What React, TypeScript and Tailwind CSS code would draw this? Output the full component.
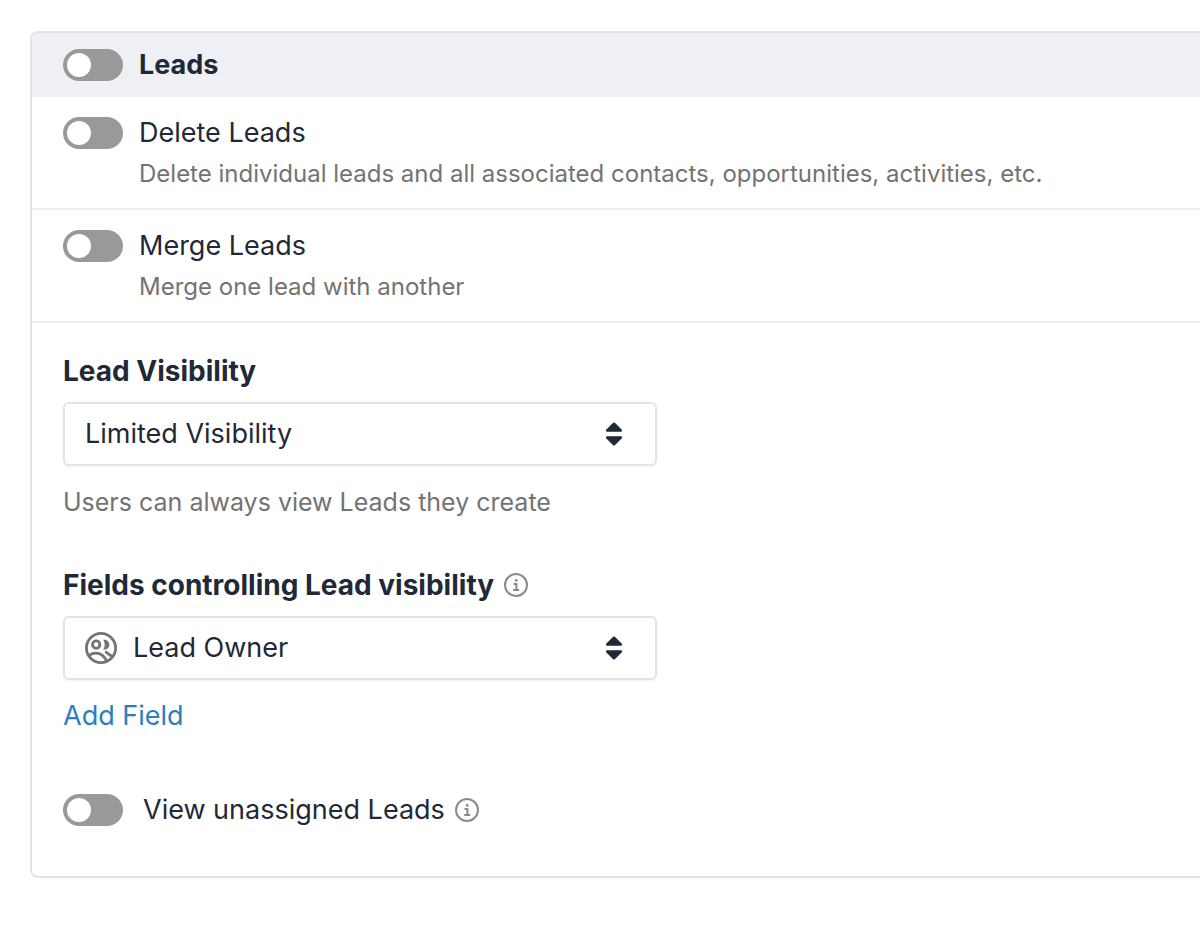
import React, { useId, useState } from "react";

function Toggle({ id }: { id: string }) {
  const [on, setOn] = useState(false);
  return (
    <input
      id={id}
      type="checkbox"
      role="switch"
      checked={on}
      onChange={(e) => setOn(e.target.checked)}
      className="flex h-8 w-15 shrink-0 cursor-pointer appearance-none items-center rounded-full bg-[#999999] px-1 before:size-6 before:rounded-full before:bg-white checked:justify-end checked:bg-[#2d7ebd]"
    />
  );
}

function PermissionRow({ title, description }: { title: string; description: string }) {
  const id = useId();
  return (
    <div className="flex gap-4 border-b-2 border-[#eeeeee] pt-5 pr-8 pb-[18px] pl-[31px]">
      <Toggle id={id} />
      <div>
        <label htmlFor={id} className="block leading-8">
          {title}
        </label>
        <p className="mt-[9px] text-[24px] leading-8 text-[#737373]">{description}</p>
      </div>
    </div>
  );
}

function InfoButton({ label }: { label: string }) {
  return (
    <button type="button" aria-label={label} className="cursor-pointer text-[#8a8a8a]">
      <svg viewBox="0 0 24 24" className="size-6" fill="none" stroke="currentColor" strokeWidth="2">
        <circle cx="12" cy="12" r="11" />
        <circle cx="12.2" cy="7.4" r="1.4" fill="currentColor" stroke="none" />
        <path d="M9.6 11.1H12.4V17M9.2 17H15.2" strokeWidth="2" />
      </svg>
    </button>
  );
}

function OwnerIcon() {
  return (
    <svg viewBox="0 0 32 32" className="size-8" fill="none" stroke="currentColor" strokeWidth="2.8">
      <circle cx="16" cy="16" r="14.6" />
      <circle cx="11.2" cy="12.6" r="3.7" />
      <path d="M18.2 7.8C21.6 7.4 24.4 9.6 24.4 12.7C24.4 15.8 21.6 18 18.2 17.6C20.2 14.6 20.2 10.8 18.2 7.8Z" fill="currentColor" stroke="none" />
      <path d="M4.4 23.2C9.4 19.6 17.2 20.2 21.6 28.8" />
      <path d="M20 19.8C23.2 20.2 23.4 23.4 27 23.8" />
    </svg>
  );
}

interface SelectFieldProps {
  id: string;
  options: string[];
  icon?: React.ReactNode;
}

function SelectField({ id, options, icon }: SelectFieldProps) {
  return (
    <div className="relative mt-[15px] max-w-[594px]">
      {icon && (
        <span className="pointer-events-none absolute inset-y-0 left-[22px] flex items-center text-[#737373]">
          {icon}
        </span>
      )}
      <select
        id={id}
        className={
          "h-16 w-full cursor-pointer appearance-none rounded-md border-2 border-[#e3e3e3] bg-white pr-16 shadow-xs " +
          (icon ? "pl-[68px]" : "pl-5")
        }
      >
        {options.map((o) => (
          <option key={o}>{o}</option>
        ))}
      </select>
      <span className="pointer-events-none absolute inset-y-0 right-[35px] flex items-center">
        <svg viewBox="0 0 16 24" className="h-6 w-4" fill="currentColor">
          <path d="M7.1 0.8Q8 0 8.9 0.8L15.6 7.6Q17 9.6 14.8 9.8H1.2Q-1 9.6 0.4 7.6Z" />
          <path d="M7.1 23.2Q8 24 8.9 23.2L15.6 16.4Q17 14.4 14.8 14.2H1.2Q-1 14.4 0.4 16.4Z" />
        </svg>
      </span>
    </div>
  );
}

export default function App() {
  return (
    <main className="overflow-hidden bg-white pt-[31px] pb-12 pl-[30px] font-['Inter',sans-serif] text-[27px] leading-8 text-[#1f2937]">
      <section className="rounded-l-lg border-2 border-r-0 border-[#e3e3e3]">
        <header className="flex items-center gap-4 rounded-tl-md bg-[#eff0f5] py-4 pr-8 pl-[31px]">
          <Toggle id="leads" />
          <label htmlFor="leads" className="font-bold">
            Leads
          </label>
        </header>
        <PermissionRow
          title="Delete Leads"
          description="Delete individual leads and all associated contacts, opportunities, activities, etc."
        />
        <PermissionRow title="Merge Leads" description="Merge one lead with another" />
        <div className="pt-8 pr-8 pb-[50px] pl-[31px]">
          <label htmlFor="visibility" className="block text-[28px] leading-8 font-bold">
            Lead Visibility
          </label>
          <SelectField id="visibility" options={["Limited Visibility"]} />
          <p className="mt-5 text-[25px] leading-8 text-[#737373]">Users can always view Leads they create</p>

          <div className="mt-[51px] flex items-center gap-[10px]">
            <label htmlFor="fields" className="text-[28px] leading-8 font-bold">
              Fields controlling Lead visibility
            </label>
            <InfoButton label="About visibility fields" />
          </div>
          <SelectField id="fields" options={["Lead Owner"]} icon={<OwnerIcon />} />
          <button type="button" className="mt-5 block cursor-pointer text-[#2d7ebd]">
            Add Field
          </button>

          <div className="mt-[62px] flex items-center">
            <Toggle id="unassigned" />
            <label htmlFor="unassigned" className="ml-5">
              View unassigned Leads
            </label>
            <span className="ml-[10px] flex">
              <InfoButton label="About unassigned leads" />
            </span>
          </div>
        </div>
      </section>
    </main>
  );
}
